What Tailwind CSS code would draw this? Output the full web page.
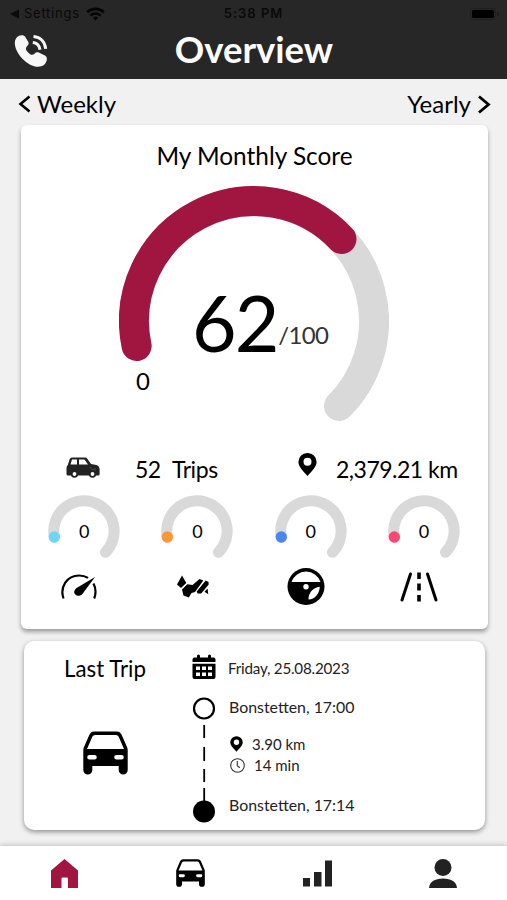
<!DOCTYPE html>
<html lang="en">
<head>
  <meta charset="UTF-8" />
  <meta name="viewport" content="width=device-width, initial-scale=1.0" />
  <title>Overview</title>
  <script src="https://cdn.jsdelivr.net/npm/@tailwindcss/browser@4"></script>
</head>
<body class="bg-[#f1f1f1] text-black font-['Lato',sans-serif]">
<div class="w-[507px] h-[900px] flex flex-col overflow-hidden">

  <!-- Header -->
  <header class="h-[79px] shrink-0 bg-[#272727]">
    <div class="h-7 grid grid-cols-3 items-center px-2 font-['Inter',sans-serif] text-[13px] text-[#090909]">
      <div class="flex items-center gap-1">
        <svg class="w-3 h-3" viewBox="0 0 12 12"><path d="M2 6l9-4.500v9z" fill="#0a0a0a"/></svg>
        <span class="tracking-[0.75px]">Settings</span>
        <svg class="w-[19px] h-[14px] ml-0.5" viewBox="0 0 19 14" fill="none" stroke="#050505" stroke-width="2.600">
          <path d="M1.200 5.200a12 12 0 0 1 16.600 0M4.400 8.600a7.300 7.300 0 0 1 10.200 0"/>
          <path d="M9.500 13.500l-2.600-2.700a3.800 3.800 0 0 1 5.200 0z" fill="#050505" stroke="none"/>
        </svg>
      </div>
      <span class="text-center font-semibold tracking-[1px]">5:38 PM</span>
      <svg class="w-[29px] h-3 justify-self-end" viewBox="0 0 29 12">
        <rect x=".5" y=".5" width="25" height="11" rx="3" fill="none" stroke="#1f1f1f"/>
        <rect x="2" y="2" width="22" height="8" rx="1.500"/>
        <path d="M27 4v4a2 2 0 0 0 0-4z" fill="#1a1a1a"/>
      </svg>
    </div>
    <div class="h-[51px] grid grid-cols-[1fr_auto_1fr] items-center pl-[14px] pr-[13px]">
      <svg class="w-[34px] h-[34px] mt-[-5px]" viewBox="0 0 34 34" fill="#f7f7f7">
        <path d="M4.500 2C6.500 .8 9.500 .8 11 2.500l3.200 5.300c.8 1.500.4 2.900-1 4.200-1.600 1.600-1.600 3.500-.4 5 .9 1.100 1.900 2.100 3 2.900 1.700 1.200 3.400 1.100 4.700-.2 1.300-1.400 3-1.700 4.700-.9l5.800 2.600c1.700 1 2.200 2.900 1.800 4.700-.8 4.300-4 6.700-8.800 6.700C14 32.800 1.500 20.500.8 9.500.7 6 2.200 3.500 4.500 2z"/>
        <path d="M19.500 2.600C26.500 3.200 31 7.800 31.700 14.800M18.800 8.600c4.300.5 6.600 2.900 7.200 7.200" fill="none" stroke="#f7f7f7" stroke-width="3"/>
      </svg>
      <h1 class="text-[36.500px] font-bold text-white mt-[-9px]">Overview</h1>
    </div>
  </header>

  <!-- Period switch -->
  <nav class="h-[46px] shrink-0 flex items-center justify-between pl-[18px] pr-[16px] pt-[5px] text-2xl">
    <a href="#" class="flex items-center gap-1.5">
      <svg class="w-[13px] h-[18px] mt-[-1px]" viewBox="0 0 13 18" fill="none" stroke="#000" stroke-width="2.600"><path d="M11.500 1.500L2.500 9l9 7.500"/></svg>
      <span class="mt-[-1px]">Weekly</span>
    </a>
    <a href="#" class="flex items-center gap-1.5">
      <span class="mt-[-1px]">Yearly</span>
      <svg class="w-[14px] h-[19px]" viewBox="0 0 14 19" fill="none" stroke="#000" stroke-width="2.800"><path d="M2 1.500l9.500 8L2 17.500"/></svg>
    </a>
  </nav>

  <!-- Score card -->
  <section class="h-[504px] shrink-0 ml-[21px] mr-[19px] bg-white rounded-md shadow-[0_3px_4px_rgba(0,0,0,0.35)]">
    <h2 class="h-[61px] pt-[13px] text-center text-[24.400px] leading-9">My Monthly Score</h2>
    <div class="relative w-[270px] h-[236px] mx-auto left-[-0.5px]">
      <svg class="w-[270px] h-[236px]" viewBox="0 0 270 236" fill="none" stroke-width="30" stroke-linecap="round">
        <path d="M17.600 160A120 120 0 1 1 220 220" stroke="#d9d9d9"/>
        <path d="M17.600 160A120 120 0 0 1 222.500 53" stroke="#a11541"/>
      </svg>
      <div class="absolute left-[73px] top-[90px] flex items-baseline">
        <span class="text-[77px] leading-[92px] tracking-[-2px]">62</span>
        <span class="relative top-[-8px] left-px text-2xl text-[#333] tracking-[-0.700px]">/100</span>
      </div>
      <span class="absolute left-[17px] top-[179px] text-2xl">0</span>
    </div>

    <div class="h-[73px] flex items-center pt-[21px] text-[23px]">
      <svg class="w-[34px] h-[22px] ml-[45px] mt-[-3px]" viewBox="0 0 34 22">
        <path d="M1.800 8L3.500 2.500Q4.200.6 6 .6h13q1.500 0 2.500 1.400L25 7l5.500 1Q33.600 9 33.600 12.500V17q0 1.500-1.500 1.500H2Q.5 18.500.5 17v-6q0-2 1.300-3z" fill="#222"/>
        <path d="M6 2.500h5v5H4.500zM13 2.500h5.500L22 7.500h-9z" fill="#fff"/>
        <path d="M24 10l2 2.500h2M29 11v3" stroke="#484848" fill="none"/>
        <circle cx="8.500" cy="17" r="2.800" fill="#fff" stroke="#222" stroke-width="1.800"/>
        <circle cx="26.500" cy="17" r="2.800" fill="#fff" stroke="#222" stroke-width="1.800"/>
      </svg>
      <span class="w-[37px] ml-[35px] tracking-[-0.500px]">52</span>
      <span class="w-[126px] tracking-[-0.400px]">Trips</span>
      <svg class="w-[19px] h-[23px] mt-[-10px]" viewBox="0 0 19 23"><path fill-rule="evenodd" d="M9.500 0A9 9 0 0 0 .4 9c0 5 5 9 9.100 14C13.600 18 18.600 14 18.600 9A9 9 0 0 0 9.500 0zm0 4.800a4 4 0 1 1 0 8 4 4 0 0 1 0-8z"/></svg>
      <span class="ml-[19px] tracking-[-0.500px]">2,379.21 km</span>
    </div>

    <!-- Category scores -->
    <div class="grid grid-cols-[repeat(4,113.300px)] pl-[6.500px]">
      <div class="relative h-[66px] flex justify-center">
        <svg class="w-[72px] h-[66px]" viewBox="0 0 72 66" fill="none" stroke-width="11" stroke-linecap="round">
          <path d="M6.400 42.300A30.200 30.200 0 1 1 57.400 57.300" stroke="#d9d9d9"/><circle cx="6.300" cy="42" r="5.700" fill="#6fd6fa"/>
        </svg>
        <span class="absolute inset-x-0 top-[22px] text-center text-lg">0</span>
      </div>
      <div class="relative h-[66px] flex justify-center">
        <svg class="w-[72px] h-[66px]" viewBox="0 0 72 66" fill="none" stroke-width="11" stroke-linecap="round">
          <path d="M6.400 42.300A30.200 30.200 0 1 1 57.400 57.300" stroke="#d9d9d9"/><circle cx="6.300" cy="42" r="5.700" fill="#ff9636"/>
        </svg>
        <span class="absolute inset-x-0 top-[22px] text-center text-lg">0</span>
      </div>
      <div class="relative h-[66px] flex justify-center">
        <svg class="w-[72px] h-[66px]" viewBox="0 0 72 66" fill="none" stroke-width="11" stroke-linecap="round">
          <path d="M6.400 42.300A30.200 30.200 0 1 1 57.400 57.300" stroke="#d9d9d9"/><circle cx="6.300" cy="42" r="5.700" fill="#4b85f0"/>
        </svg>
        <span class="absolute inset-x-0 top-[22px] text-center text-lg">0</span>
      </div>
      <div class="relative h-[66px] flex justify-center">
        <svg class="w-[72px] h-[66px]" viewBox="0 0 72 66" fill="none" stroke-width="11" stroke-linecap="round">
          <path d="M6.400 42.300A30.200 30.200 0 1 1 57.400 57.300" stroke="#d9d9d9"/><circle cx="6.300" cy="42" r="5.700" fill="#fb4870"/>
        </svg>
        <span class="absolute inset-x-0 top-[22px] text-center text-lg">0</span>
      </div>
    </div>
    <div class="h-[52px] flex items-center pl-10">
      <svg class="w-9 h-[26px]" viewBox="0 0 36 26">
        <path d="M2.500 24.500C-1.500 13 6 1.500 18 1.500c3.500 0 6.500.8 9 2.400M32.500 9.500c2.300 4.500 2.600 10 .7 15" fill="none" stroke="#000" stroke-width="2.200"/>
        <path d="M34 3L22.500 18.500c-1 2-3 3.500-5.200 3.300-2.800-.2-4.500-2.600-4-4.600.4-1.500 1.500-2.900 2.700-3.500z"/>
      </svg>
      <svg class="w-8 h-[25px] ml-20" viewBox="0 0 32 25">
        <path d="M5 .5L9.300 8 4 13 0 9.500z"/>
        <path d="M10.300 9.200l5.200.8L22.500 4l3.800 1.500L18 17l-3.500 1-2.700 4.500-5.300-2-1.500-6z"/>
        <path d="M28.700 5.500l2.800 1.500.2 2.500-7.500 9h-3.500l-1-2zM27.500 16.800l3-3.300.8 5.700z"/>
      </svg>
      <svg class="w-[38px] h-[38px] ml-[78px]" viewBox="0 0 38 38">
        <circle cx="19" cy="18.500" r="18.500"/>
        <path d="M4.500 14a15.300 15.300 0 0 1 29 0z" fill="#fff"/>
        <path d="M21.500 31.500c-.3-6.500 4.200-11.500 11.300-12.700-.3 6.500-4.800 12.700-11.300 12.700z" fill="#fff"/>
        <circle cx="19" cy="18.700" r="2.700" fill="#fff"/>
      </svg>
      <svg class="w-[38px] h-[30px] ml-[75px]" viewBox="0 0 38 30" fill="none" stroke="#000" stroke-width="3" stroke-linecap="round">
        <path d="M10.500 2L2 28M27.500 2L36 28"/>
        <path d="M19 .5v6.500M19 11.500v7M19 23v6.500" stroke-width="3.600" stroke-linecap="butt"/>
      </svg>
    </div>
  </section>

  <!-- Last trip card -->
  <section class="h-[189px] shrink-0 mt-3 ml-6 mr-[22px] flex bg-white rounded-[10px] shadow-[0_2px_5px_rgba(0,0,0,0.4)]">
    <div class="w-[162px] flex flex-col items-center">
      <h2 class="pt-[12px] text-[22.300px] leading-8">Last Trip</h2>
      <svg class="w-[45px] h-[44px] mt-[46px]" viewBox="0 0 45 44">
        <path fill-rule="evenodd" d="M11 .5h23q3 0 4.500 3L44 16q.7 1.500.7 3v20a4.500 4.500 0 0 1-9 0v-4H9.300v4a4.500 4.500 0 0 1-9 0V19q0-1.500.7-3L6.500 3.500q1.500-3 4.500-3zM12 4q-1.800 0-2.700 1.800L4 18h37L35.700 5.800Q34.800 4 33 4zM6.500 24a2.300 2.300 0 0 0 0 4.600h5a2.300 2.300 0 0 0 0-4.600zM33.500 24a2.300 2.300 0 0 0 0 4.600h5a2.300 2.300 0 0 0 0-4.600z"/>
      </svg>
    </div>
    <div class="w-[37px] flex flex-col items-center">
      <svg class="w-6 h-[26px] mt-[13px] ml-[-2px]" viewBox="0 0 24 26">
        <path d="M2.500 3.500H5V2q0-1.500 1.500-1.500T8 2v1.500h8V2q0-1.500 1.500-1.500T19 2v1.500h2.500q2 0 2 2V8H.5V5.500q0-2 2-2z"/>
        <path fill-rule="evenodd" d="M.5 9.700h23V23q0 2-2 2h-19q-2 0-2-2zM4 12.500v3.500h4v-3.500zm6 0v3.500h4v-3.500zm6 0v3.500h4v-3.500zM4 18.500v3.500h4v-3.500zm6 0v3.500h4v-3.500zm6 0v3.500h4v-3.500z"/>
      </svg>
      <svg class="w-6 h-[128px] mt-[17px] ml-[-2px]" viewBox="0 0 24 128">
        <circle cx="12" cy="11.500" r="10" fill="none" stroke="#000" stroke-width="2.200"/>
        <path d="M12.200 28v13M12.200 50v14M12.200 72v13M12.200 91v14" stroke="#000" stroke-width="1.800"/>
        <circle cx="12" cy="114.500" r="11"/>
      </svg>
    </div>
    <div class="pl-[5px] text-[15.900px] text-[#222]">
      <p class="mt-[15px] text-[15.200px] leading-6 tracking-[-0.220px]">Friday, 25.08.2023</p>
      <p class="mt-[15px] pl-[1px] leading-6">Bonstetten, 17:00</p>
      <div class="mt-[15px] pl-[2px] text-[15px] leading-[21px]">
        <p class="flex items-center gap-[9px]">
          <svg class="w-[13px] h-[16px] mt-[-2px]" viewBox="0 0 19 23"><path fill-rule="evenodd" d="M9.500 0A9 9 0 0 0 .4 9c0 5 5 9 9.100 14C13.600 18 18.600 14 18.600 9A9 9 0 0 0 9.500 0zm0 4.800a4 4 0 1 1 0 8 4 4 0 0 1 0-8z"/></svg>
          3.90 km
        </p>
        <p class="flex items-center gap-[9px]">
          <svg class="w-[15px] h-[15px]" viewBox="0 0 15 15" fill="none" stroke="#333" stroke-width="1.100"><circle cx="7.500" cy="7.500" r="6.800"/><path d="M7.300 3v4.800l2.500 2"/></svg>
          14 min
        </p>
      </div>
      <p class="mt-[17px] pl-[1px] leading-6">Bonstetten, 17:14</p>
    </div>
  </section>

  <!-- Bottom navigation -->
  <footer class="h-[54px] shrink-0 mt-4 flex items-start pt-3 bg-white shadow-[0_-1px_5px_rgba(0,0,0,0.2)]">
    <a href="#" class="ml-[51px]">
      <svg class="w-[27px] h-[30px]" viewBox="0 0 27 30"><path d="M13.500 1L27 12.500V30H17v-9.500q0-1-1-1h-4.500q-1 0-1 1V30H0V12.500z" fill="#a11541"/></svg>
    </a>
    <a href="#" class="ml-[98px]">
      <svg class="w-[29px] h-[30px]" viewBox="0 -1 45 46">
        <path fill-rule="evenodd" d="M11 .5h23q3 0 4.500 3L44 16q.7 1.500.7 3v20a4.500 4.500 0 0 1-9 0v-4H9.300v4a4.500 4.500 0 0 1-9 0V19q0-1.500.7-3L6.500 3.500q1.500-3 4.500-3zM12 4q-1.800 0-2.700 1.800L4 18h37L35.700 5.800Q34.800 4 33 4zM6.500 24a2.300 2.300 0 0 0 0 4.600h5a2.300 2.300 0 0 0 0-4.600zM33.500 24a2.300 2.300 0 0 0 0 4.600h5a2.300 2.300 0 0 0 0-4.600z"/>
      </svg>
    </a>
    <a href="#" class="ml-[98px]">
      <svg class="w-[29px] h-[30px]" viewBox="0 0 29 30" fill="#222"><path d="M0 20h7v8.500H0zM11 14h7.500v14.500H11zM22 2.500h7v26h-7z"/></svg>
    </a>
    <a href="#" class="ml-[97px]">
      <svg class="w-7 h-[30px]" viewBox="0 0 28 30" fill="#222"><circle cx="14" cy="9.500" r="8.500"/><path d="M0 30c.5-6 5.500-9.500 14-9.500S27.500 24 28 30z"/></svg>
    </a>
  </footer>

</div>
</body>
</html>
